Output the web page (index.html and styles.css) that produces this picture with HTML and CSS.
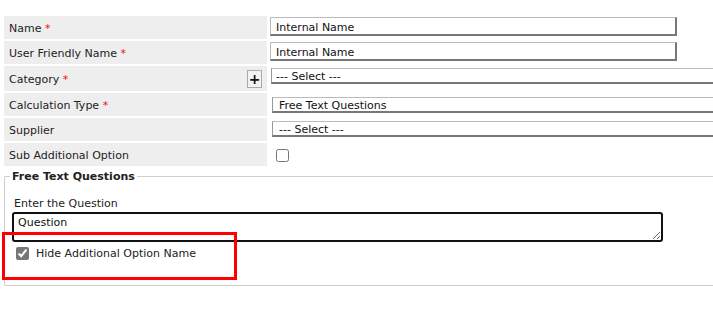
FILE: index.html
```html
<!DOCTYPE html>
<html lang="en">
<head>
    <meta charset="UTF-8">
    <title>Additional Option</title>
    <link rel="stylesheet" href="styles.css">
</head>
<body>
    <div class="page">
        <div class="form-grid">
            <div class="label"><span>Name <span class="req">*</span></span></div>
            <div class="value"><input type="text" class="text-input" value="Internal Name"></div>

            <div class="label"><span>User Friendly Name <span class="req">*</span></span></div>
            <div class="value"><input type="text" class="text-input" value="Internal Name"></div>

            <div class="label label-action">
                <span>Category <span class="req">*</span></span>
                <button class="add-btn" type="button">+</button>
            </div>
            <div class="value"><select class="select select-category"><option>--- Select ---</option></select></div>

            <div class="label"><span>Calculation Type <span class="req">*</span></span></div>
            <div class="value"><select class="select select-calc"><option>Free Text Questions</option></select></div>

            <div class="label"><span>Supplier</span></div>
            <div class="value"><select class="select select-supplier"><option>--- Select ---</option></select></div>

            <div class="label"><span>Sub Additional Option</span></div>
            <div class="value"><input type="checkbox" class="check"></div>
        </div>

        <fieldset class="group">
            <legend>Free Text Questions</legend>
            <label class="field-label" for="question">Enter the Question</label>
            <textarea id="question" class="question">Question</textarea>
            <label class="check-row">
                <input type="checkbox" class="check check-on" checked>
                <span>Hide Additional Option Name</span>
            </label>
        </fieldset>

        <div class="highlight"></div>
    </div>
</body>
</html>
```

FILE: styles.css
```css
* {
    margin: 0;
    padding: 0;
    box-sizing: border-box;
}

html, body {
    overflow: hidden;
}

body {
    font-family: "DejaVu Sans", Verdana, sans-serif;
    font-size: 11px;
    color: #222;
    background: #fff;
}

.page {
    position: relative;
    padding: 16px 0 0 4px;
}

/* Form rows */
.form-grid {
    display: grid;
    grid-template-columns: 263px 1fr;
    grid-template-rows: 23px 23px 25px 23px 23px 23px;
    column-gap: 2px;
    row-gap: 2px;
}

.label {
    background: #eeeeee;
    padding: 1px 0 0 5px;
    display: flex;
    align-items: center;
    line-height: 13px;
}

.label-action {
    justify-content: space-between;
    padding-right: 5px;
}

.req {
    color: #ee1111;
}

.add-btn {
    width: 15px;
    height: 18px;
    border: 1px solid #aaa;
    background: #f2f2f2;
    font-family: "DejaVu Sans", sans-serif;
    font-size: 14px;
    font-weight: 700;
    line-height: 14px;
    color: #111;
}

.value {
    display: flex;
    align-items: flex-start;
    min-width: 0;
}

.text-input {
    width: 407px;
    height: 19px;
    margin: 1px 0 0 1px;
    padding: 2px 5px 0;
    border-style: solid;
    border-width: 1px 2px 2px 1px;
    border-color: #bbb #777 #777 #bbb;
    font: inherit;
    color: #111;
    background: #fff;
}

.select {
    appearance: none;
    flex: 1;
    min-width: 0;
    height: 16px;
    padding: 1px 4px 0;
    border: 1px solid #bbb;
    border-bottom: 2px solid #777;
    border-left-color: #999;
    border-right: 0;
    border-radius: 0;
    font: inherit;
    line-height: 13px;
    color: #111;
    background: #fff;
}

.select-category {
    margin: 2px 0 0 2px;
}

.select-calc {
    margin: 4px 0 0 3px;
    padding-left: 6px;
}

.select-supplier {
    margin: 3px 0 0 3px;
    padding-left: 6px;
}

.check {
    width: 13px;
    height: 13px;
    margin: 6px 0 0 7px;
}

/* Free text group */
.group {
    margin: 4px 0 0 0;
    padding: 0 0 25px 7px;
    border: 1px solid #cfcfcf;
    border-right: 0;
    border-radius: 2px 0 0 2px;
}

.group legend {
    font-weight: 700;
    line-height: 13px;
    padding: 0 2px;
    margin-left: -2px;
}

.field-label {
    display: block;
    margin-top: 14px;
    padding-left: 2px;
    line-height: 13px;
}

.question {
    display: block;
    width: 651px;
    height: 30px;
    margin-top: 2px;
    padding: 2px 4px 1px;
    border: 2px solid #111;
    border-radius: 3px;
    font: inherit;
    line-height: 14px;
    color: #111;
    resize: both;
}

.check-row {
    display: flex;
    align-items: center;
    gap: 7px;
    margin: 5px 0 0 4px;
    line-height: 13px;
}

.check-on {
    margin: 0;
    accent-color: #777;
}

/* Annotation */
.highlight {
    position: absolute;
    left: 2px;
    top: 232px;
    width: 235px;
    height: 48px;
    border: 3px solid #ff0000;
}
```
